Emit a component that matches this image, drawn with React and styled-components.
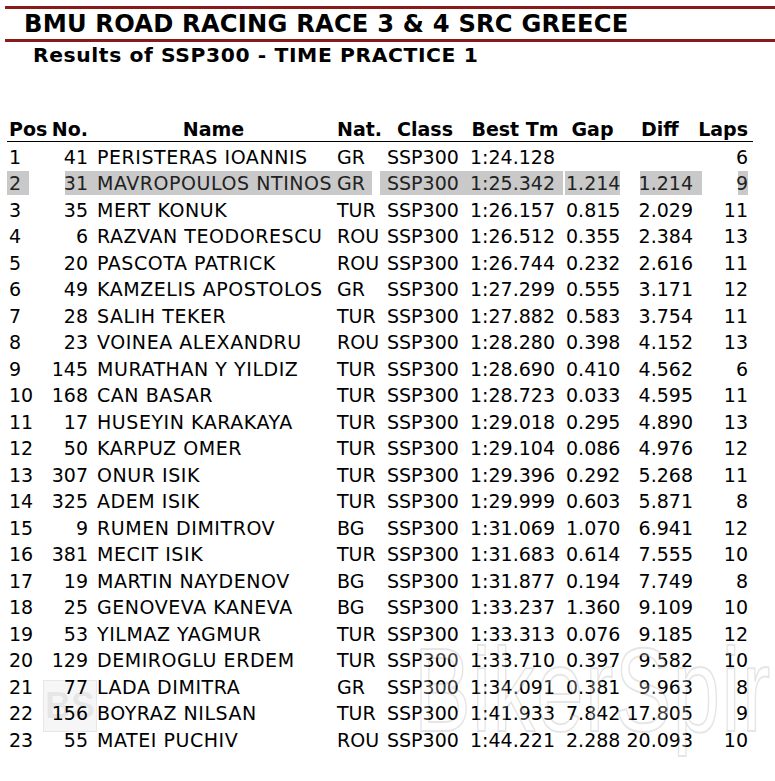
import React from 'react';
import styled, { createGlobalStyle } from 'styled-components';

const GlobalStyle = createGlobalStyle`
	html, body {
		margin: 0;
		padding: 0;
		background: #fff;
	}
	body {
		font-family: 'DejaVu Sans', Verdana, sans-serif;
		color: #000;
	}
`;

const results = [
	[1, 41, 'PERISTERAS IOANNIS', 'GR', '1:24.128', '', '', 6],
	[2, 31, 'MAVROPOULOS NTINOS', 'GR', '1:25.342', '1.214', '1.214', 9],
	[3, 35, 'MERT KONUK', 'TUR', '1:26.157', '0.815', '2.029', 11],
	[4, 6, 'RAZVAN TEODORESCU', 'ROU', '1:26.512', '0.355', '2.384', 13],
	[5, 20, 'PASCOTA PATRICK', 'ROU', '1:26.744', '0.232', '2.616', 11],
	[6, 49, 'KAMZELIS APOSTOLOS', 'GR', '1:27.299', '0.555', '3.171', 12],
	[7, 28, 'SALIH TEKER', 'TUR', '1:27.882', '0.583', '3.754', 11],
	[8, 23, 'VOINEA ALEXANDRU', 'ROU', '1:28.280', '0.398', '4.152', 13],
	[9, 145, 'MURATHAN Y YILDIZ', 'TUR', '1:28.690', '0.410', '4.562', 6],
	[10, 168, 'CAN BASAR', 'TUR', '1:28.723', '0.033', '4.595', 11],
	[11, 17, 'HUSEYIN KARAKAYA', 'TUR', '1:29.018', '0.295', '4.890', 13],
	[12, 50, 'KARPUZ OMER', 'TUR', '1:29.104', '0.086', '4.976', 12],
	[13, 307, 'ONUR ISIK', 'TUR', '1:29.396', '0.292', '5.268', 11],
	[14, 325, 'ADEM ISIK', 'TUR', '1:29.999', '0.603', '5.871', 8],
	[15, 9, 'RUMEN DIMITROV', 'BG', '1:31.069', '1.070', '6.941', 12],
	[16, 381, 'MECIT ISIK', 'TUR', '1:31.683', '0.614', '7.555', 10],
	[17, 19, 'MARTIN NAYDENOV', 'BG', '1:31.877', '0.194', '7.749', 8],
	[18, 25, 'GENOVEVA KANEVA', 'BG', '1:33.237', '1.360', '9.109', 10],
	[19, 53, 'YILMAZ YAGMUR', 'TUR', '1:33.313', '0.076', '9.185', 12],
	[20, 129, 'DEMIROGLU ERDEM', 'TUR', '1:33.710', '0.397', '9.582', 10],
	[21, 77, 'LADA DIMITRA', 'GR', '1:34.091', '0.381', '9.963', 8],
	[22, 156, 'BOYRAZ NILSAN', 'TUR', '1:41.933', '7.842', '17.805', 9],
	[23, 55, 'MATEI PUCHIV', 'ROU', '1:44.221', '2.288', '20.093', 10],
];

// column tracks: pos | sp | no | name | nat | sp | class | best | sp | gap | sp | diff | sp | laps | sp
const COLS = '22px 36px 27px 243px 37px 8px 87px 96px 2px 55px 20px 62px 36px 10px 5px';

const Page = styled.div`
	position: relative;
	width: 775px;
	height: 781px;
	overflow: hidden;
`;

const TitleBar = styled.div`
	margin: 6px 0 0 5px;
	padding-left: 19px;
	border-top: 3px solid #8b1a1a;
	border-bottom: 3px solid #8b1a1a;
	height: 30px;
	font-size: 24.2px;
	font-weight: 700;
	letter-spacing: 0.2px;
	line-height: 30px;
	white-space: nowrap;
`;

const SubTitle = styled.div`
	margin: 1px 0 0 33px;
	font-size: 20.3px;
	font-weight: 700;
	letter-spacing: 0.6px;
	line-height: 24px;
`;

const Table = styled.div`
	margin: 50px 0 0 7px;
	width: 746px;
	display: flex;
	flex-direction: column;
	gap: 2.5px;
	font-size: 19px;
`;

const Row = styled.div`
	display: grid;
	grid-template-columns: ${COLS};
	height: 24px;
	line-height: 24px;
	${(p) => p.$head && 'font-weight: 700; border-bottom: 1px solid #000;'}
`;

const Cell = styled.div`
	grid-column: ${(p) => p.$col};
	grid-row: 1;
	display: flex;
	justify-content: ${(p) =>
		p.$align === 'end' ? 'flex-end' : p.$align === 'center' ? 'center' : 'flex-start'};
	padding: 0 ${(p) => p.$pr || 0}px 0 ${(p) => p.$pl || 0}px;
	white-space: nowrap;
	background: ${(p) => (p.$hl ? '#c9c9c9' : 'transparent')};
	color: ${(p) => (p.$hl ? '#222' : '#000')};
`;

const NameCell = styled(Cell)`
	letter-spacing: 0.55px;
`;

const Watermark = styled.div`
	position: absolute;
	left: 414px;
	top: 622px;
	font-family: 'Liberation Sans', Arial, sans-serif;
	font-size: 118px;
	letter-spacing: 2px;
	transform: scaleX(0.72);
	transform-origin: left top;
	color: rgba(255, 255, 255, 0.25);
	-webkit-text-stroke: 2px rgba(0, 0, 0, 0.1);
	pointer-events: none;
	white-space: nowrap;
`;

const LogoMark = styled.div`
	position: absolute;
	left: 43px;
	top: 680px;
	width: 52px;
	height: 50px;
	border: 1px solid rgba(0, 0, 0, 0.06);
	background: rgba(0, 0, 0, 0.035);
	display: flex;
	align-items: center;
	justify-content: center;
	font-family: 'Liberation Sans', Arial, sans-serif;
	font-weight: 700;
	font-size: 36px;
	color: rgba(0, 0, 0, 0.07);
	pointer-events: none;
`;

const App = () => {
	return (
		<Page>
			<GlobalStyle />
			<TitleBar>BMU ROAD RACING RACE 3 &amp; 4 SRC GREECE</TitleBar>
			<SubTitle>Results of SSP300 - TIME PRACTICE 1</SubTitle>
			<Table>
				<Row $head>
					<Cell $col={1} $pl={2}>Pos</Cell>
					<Cell $col={3} $align='end' $pr={4}>No.</Cell>
					<Cell $col={4} $align='center'>Name</Cell>
					<Cell $col={5} $pl={2}>Nat.</Cell>
					<Cell $col={7} $align='center' $pl={3}>Class</Cell>
					<Cell $col={8} $align='center'>Best Tm</Cell>
					<Cell $col={10} $align='center'>Gap</Cell>
					<Cell $col={12} $pl={1}>Diff</Cell>
					<Cell $col={14} $align='end' $pr={-2}>Laps</Cell>
				</Row>
				{results.map(([pos, no, name, nat, best, gap, diff, laps]) => {
					const hl = pos === 2;
					return (
						<Row key={pos}>
							<Cell $col={1} $pl={2} $hl={hl}>{pos}</Cell>
							<Cell $col={3} $align='end' $pr={4} $hl={hl}>{no}</Cell>
							<NameCell $col={4} $pl={5} $hl={hl}>{name}</NameCell>
							<Cell $col={5} $pl={2} $hl={hl}>{nat}</Cell>
							<Cell $col={7} $pl={7} $hl={hl}>SSP300</Cell>
							<Cell $col={8} $pl={3} $hl={hl}>{best}</Cell>
							<Cell $col={10} $pl={1} $hl={hl && gap}>{gap}</Cell>
							<Cell $col={12} $align='end' $pr={9} $hl={hl && diff}>{diff}</Cell>
							<Cell $col={14} $align='end' $hl={hl}>{laps}</Cell>
						</Row>
					);
				})}
			</Table>
			<LogoMark>BS</LogoMark>
			<Watermark>BikerSpirit</Watermark>
		</Page>
	);
};

export default App;
